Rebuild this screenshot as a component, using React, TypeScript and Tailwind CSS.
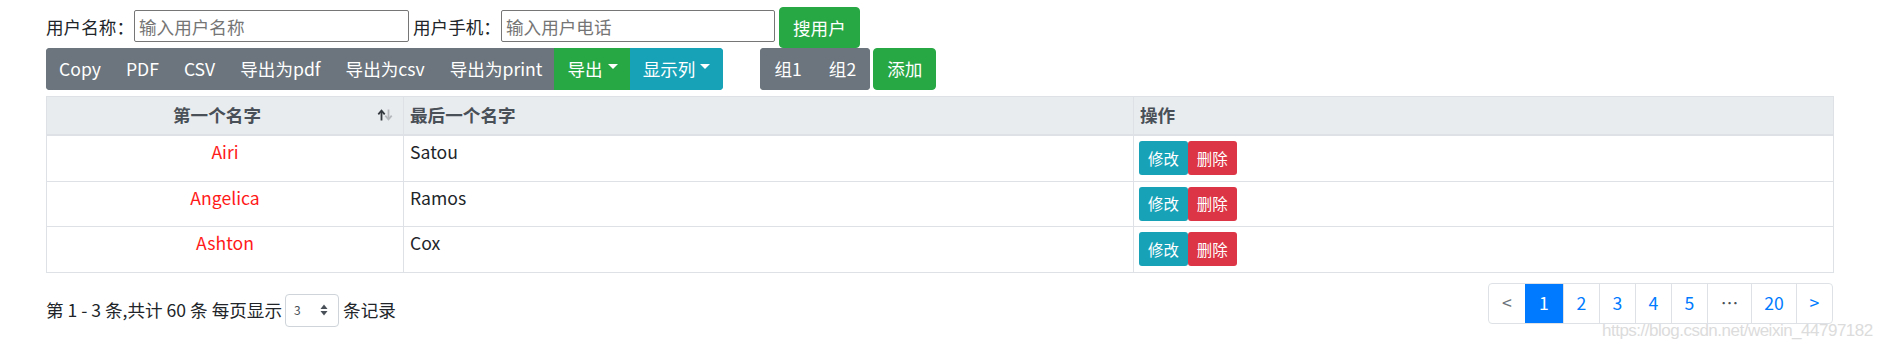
import React from "react";

const rows = [
  { first: "Airi", last: "Satou" },
  { first: "Angelica", last: "Ramos" },
  { first: "Ashton", last: "Cox" },
];

const exportBtns = ["Copy", "PDF", "CSV", "导出为pdf", "导出为csv", "导出为print"];

const Caret = () => (
  <span className="ml-[5px] inline-block h-0 w-0 translate-y-[-3px] border-x-[5px] border-t-[5px] border-x-transparent border-t-white align-middle" />
);

const SortIcon = () => (
  <svg width="16" height="12" viewBox="0 0 16 12" className="shrink-0">
    <path d="M4.5 11.5V2" stroke="#343a40" strokeWidth="1.8" fill="none" />
    <path d="M1.3 5.3L4.5 1.6L7.7 5.3" stroke="#343a40" strokeWidth="1.8" fill="none" />
    <path d="M11.5 0.5V10" stroke="#b5b9bd" strokeWidth="1.8" fill="none" />
    <path d="M8.3 6.7L11.5 10.4L14.7 6.7" stroke="#b5b9bd" strokeWidth="1.8" fill="none" />
  </svg>
);

export default function App() {
  return (
    <div className="relative h-[346px] w-[1882px] bg-white font-['Noto_Sans_CJK_SC',sans-serif] text-[17.6px] text-[#212529]">
      <div className="ml-[46px] w-[1787px]">
        {/* search row */}
        <div className="flex items-start pt-[7px]">
          <span className="mt-[7px] leading-[26px]">用户名称：</span>
          <input
            placeholder="输入用户名称"
            className="mt-[3px] h-[32px] w-[275px] rounded-[2px] border border-[#767676] px-[4px] text-[17.6px] outline-none placeholder:text-[#757575]"
          />
          <span className="ml-[4px] mt-[7px] leading-[26px]">用户手机：</span>
          <input
            placeholder="输入用户电话"
            className="mt-[3px] h-[32px] w-[274px] rounded-[2px] border border-[#767676] px-[4px] text-[17.6px] outline-none placeholder:text-[#757575]"
          />
          <button className="ml-[4px] h-[41px] rounded-[4px] border border-[#28a745] bg-[#28a745] px-[13px] leading-[26px] text-white">
            搜用户
          </button>
        </div>

        {/* toolbar */}
        <div className="flex h-[42px] items-stretch">
          <div className="flex overflow-hidden rounded-[4px]">
            {exportBtns.map((b, i) => (
              <button
                key={b}
                className={`border border-[#6c757d] bg-[#6c757d] px-[12px] leading-[26px] text-white ${i > 0 ? "-ml-px" : ""}`}
              >
                {b}
              </button>
            ))}
            <button className="-ml-px flex items-center border border-[#28a745] bg-[#28a745] px-[12px] leading-[26px] text-white">
              导出
              <Caret />
            </button>
            <button className="-ml-px flex items-center border border-[#17a2b8] bg-[#17a2b8] px-[12px] leading-[26px] text-white">
              显示列
              <Caret />
            </button>
          </div>
          <div className="ml-[37px] flex overflow-hidden rounded-[4px]">
            <button className="border border-[#6c757d] bg-[#6c757d] px-[13px] leading-[26px] text-white">组1</button>
            <button className="-ml-px border border-[#6c757d] bg-[#6c757d] px-[13px] leading-[26px] text-white">组2</button>
          </div>
          <button className="ml-[3px] rounded-[4px] border border-[#28a745] bg-[#28a745] px-[13px] leading-[26px] text-white">
            添加
          </button>
        </div>

        {/* table */}
        <table className="mt-[6px] w-[1787px] table-fixed border-collapse border border-[#dee2e6]">
          <colgroup>
            <col className="w-[357px]" />
            <col className="w-[730px]" />
            <col className="w-[700px]" />
          </colgroup>
          <thead>
            <tr className="bg-[#e9ecef] text-[#495057]">
              <th className="border border-b-2 border-[#dee2e6] p-0 font-bold">
                <div className="flex items-center pb-[7px] pl-[10px] pr-[10px] pt-[5px] leading-[25px]">
                  <span className="flex-1 text-center">第一个名字</span>
                  <SortIcon />
                </div>
              </th>
              <th className="border border-b-2 border-[#dee2e6] px-[6px] pb-[7px] pt-[5px] text-left font-bold leading-[25px]">
                最后一个名字
              </th>
              <th className="border border-b-2 border-[#dee2e6] px-[6px] pb-[7px] pt-[5px] text-left font-bold leading-[25px]">
                操作
              </th>
            </tr>
          </thead>
          <tbody>
            {rows.map((r) => (
              <tr key={r.first}>
                <td className="border border-[#dee2e6] px-[6px] py-[5px] text-center align-top leading-[22px] text-[#ff1a1a]">
                  {r.first}
                </td>
                <td className="border border-[#dee2e6] px-[6px] py-[5px] align-top leading-[22px]">{r.last}</td>
                <td className="border border-[#dee2e6] px-[5px] pb-[5.5px] pt-[5px] align-top">
                  <div className="flex">
                    <button className="h-[34px] rounded-[3px] bg-[#17a2b8] px-[9px] text-[15.4px] leading-[23px] text-white">
                      修改
                    </button>
                    <button className="h-[34px] rounded-[3px] bg-[#dc3545] px-[9px] text-[15.4px] leading-[23px] text-white">
                      删除
                    </button>
                  </div>
                </td>
              </tr>
            ))}
          </tbody>
        </table>

        {/* footer */}
        <div className="mt-[10px] flex items-start justify-between">
          <div className="mt-[11px] flex items-center">
            <span>第 1 - 3 条,共计 60 条</span>
            <span className="ml-[4px]">每页显示</span>
            <div className="ml-[3px] flex h-[33px] w-[54px] items-center justify-between rounded-[4px] border border-[#ced4da] pl-[8px] pr-[10px] text-[12px] text-[#495057]">
              <span>3</span>
              <svg width="8" height="12" viewBox="0 0 8 12">
                <path d="M4 0.5L7.5 5H0.5Z" fill="#495057" />
                <path d="M4 11.5L7.5 7H0.5Z" fill="#495057" />
              </svg>
            </div>
            <span className="ml-[4px]">条记录</span>
          </div>
          <div className="flex h-[41px] overflow-hidden rounded-[4px] border border-[#dee2e6] leading-[22px]">
            <span className="flex w-[36px] items-center justify-center text-[#6c757d]">&lt;</span>
            <span className="flex w-[38px] items-center justify-center bg-[#007bff] text-white">1</span>
            {["2", "3", "4", "5"].map((p) => (
              <span key={p} className="flex w-[36px] items-center justify-center border-l border-[#dee2e6] text-[#007bff]">
                {p}
              </span>
            ))}
            <span className="flex w-[44px] items-center justify-center border-l border-[#dee2e6] text-[#495057]">…</span>
            <span className="flex w-[45px] items-center justify-center border-l border-[#dee2e6] text-[#007bff]">20</span>
            <span className="flex w-[36px] items-center justify-center border-l border-[#dee2e6] text-[#007bff]">&gt;</span>
          </div>
        </div>
      </div>

      {/* watermark */}
      <div className="pointer-events-none absolute left-[1602px] top-[318px] font-['Liberation_Sans',sans-serif] text-[17px] tracking-[-0.5px] text-[#dcdcdc]">
        https://blog.csdn.net/weixin_44797182
      </div>
    </div>
  );
}
